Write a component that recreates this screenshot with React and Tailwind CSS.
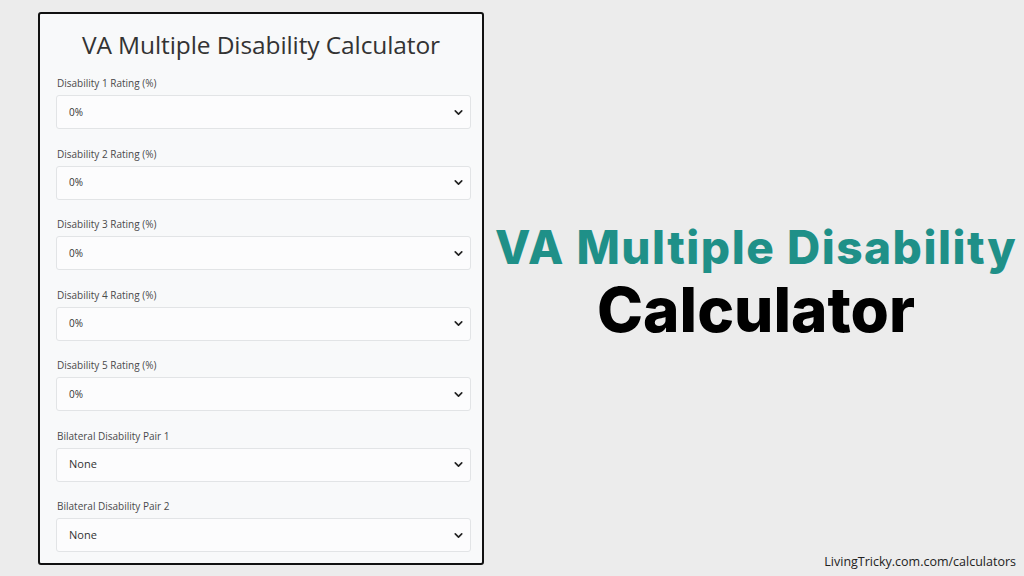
import { ChevronDown } from "lucide-react";

const fields = [
  { label: "Disability 1 Rating (%)", value: "0%" },
  { label: "Disability 2 Rating (%)", value: "0%" },
  { label: "Disability 3 Rating (%)", value: "0%" },
  { label: "Disability 4 Rating (%)", value: "0%" },
  { label: "Disability 5 Rating (%)", value: "0%" },
  { label: "Bilateral Disability Pair 1", value: "None" },
  { label: "Bilateral Disability Pair 2", value: "None" },
];

function Field({ label, value }) {
  return (
    <div className="flex flex-col">
      <div className="text-[10px] leading-[14px] text-[#4a4a4a] font-medium pl-[1px]">{label}</div>
      <div className="mt-[5px] h-[34px] w-[415px] rounded-[3px] border border-[#e2e4e6] bg-[#fcfcfd] flex items-center justify-between pl-[12px] pr-[5px]">
        <span className={value === "None" ? "text-[11px] text-[#333]" : "text-[10px] text-[#333]"}>{value}</span>
        <ChevronDown size={13} strokeWidth={3} className="text-[#222]" />
      </div>
    </div>
  );
}

export default function App() {
  return (
    <div
      className="relative h-[576px] w-[1024px] bg-[#ececec] flex overflow-hidden"
      style={{ fontFamily: '"Open Sans", "DejaVu Sans", sans-serif' }}
    >
      {/* Calculator card */}
      <div className="ml-[38px] mt-[12px] h-[553px] w-[446px] rounded-[3px] border-2 border-[#111] bg-[#f8f9fa] px-[16px] flex flex-col">
        <h1 className="text-center text-[24.5px] leading-[30px] text-[#333] mt-[16px] mb-[16px] tracking-[-0.1px]">
          VA Multiple Disability Calculator
        </h1>
        <div className="flex flex-col gap-[17.5px]">
          {fields.map((f) => (
            <Field key={f.label} label={f.label} value={f.value} />
          ))}
        </div>
      </div>

      {/* Headline */}
      <div
        className="flex-1 flex flex-col items-center justify-center pb-[10px] pl-[4px]"
        style={{ fontFamily: 'Inter, "Open Sans", sans-serif' }}
      >
        <div className="text-[46px] leading-[56px] font-extrabold text-[#1f9088] tracking-[1.5px]">
          VA Multiple Disability
        </div>
        <div className="text-[62px] leading-[74px] font-extrabold text-black tracking-[0px] -mt-[2px]">
          Calculator
        </div>
      </div>

      <div className="absolute right-[8px] bottom-[4px] text-[12.5px] text-[#222]">
        LivingTricky.com.com/calculators
      </div>
    </div>
  );
}
